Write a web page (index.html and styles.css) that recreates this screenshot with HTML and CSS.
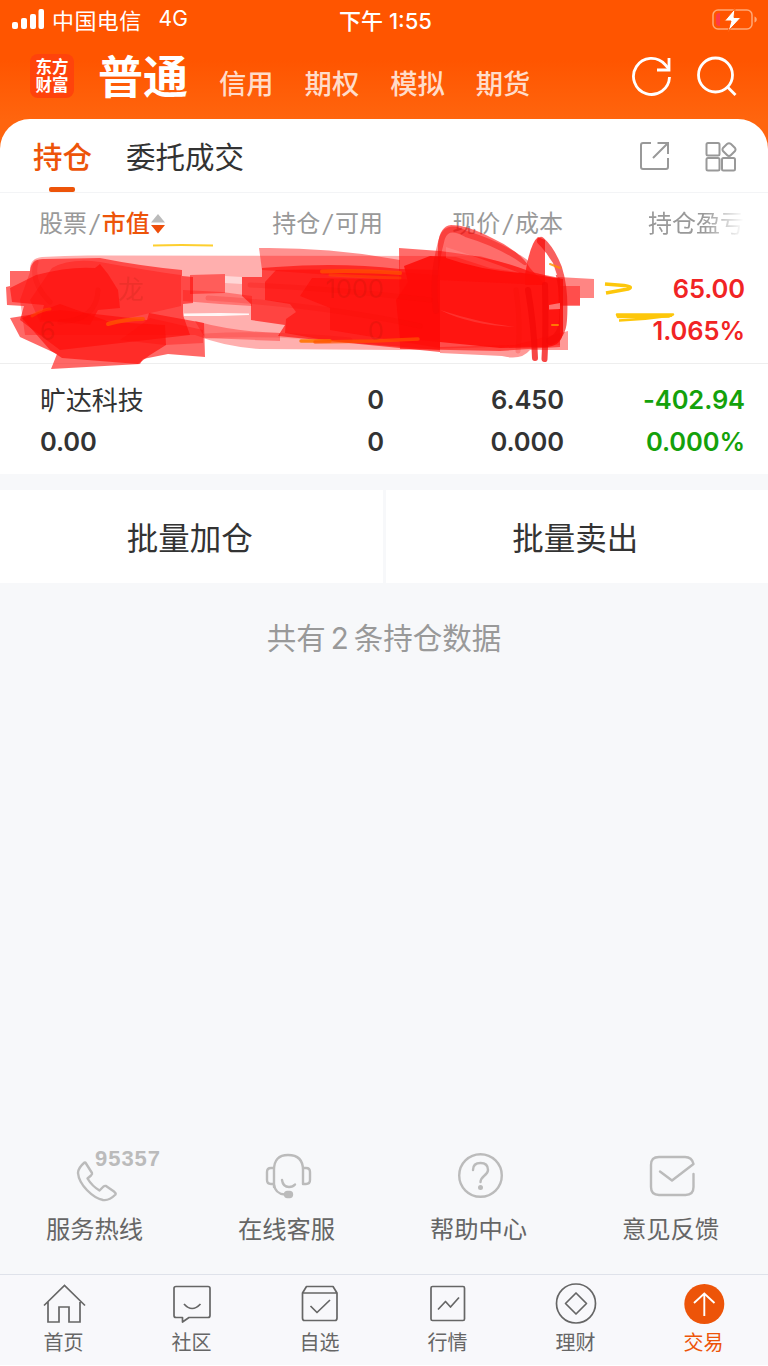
FILE: index.html
```html
<!DOCTYPE html>
<html lang="zh-CN">
<head>
  <meta charset="UTF-8">
  <meta name="viewport" content="width=device-width, initial-scale=1.0">
  <title>持仓</title>
  <link rel="stylesheet" href="styles.css">
</head>
<body>
  <div class="app">
    <div class="status">
      <div class="carrier">
        <svg width="34" height="22" viewBox="0 0 34 22" fill="#fff">
          <rect x="0" y="13" width="6" height="7" rx="2"/>
          <rect x="9" y="9" width="6" height="11" rx="2"/>
          <rect x="18" y="5" width="6" height="15" rx="2"/>
          <rect x="26.500" y="0" width="5.500" height="20" rx="2"/>
        </svg>
        <span class="operator">中国电信</span>
        <span>4G</span>
      </div>
      <div class="time">下午 1:55</div>
      <svg class="battery" width="48" height="24" viewBox="0 0 48 24">
        <rect x="2" y="2" width="39" height="19" rx="5" fill="none" stroke="#ffa875" stroke-width="1.500"/>
        <path d="M43.500 8.500c3 1 3 5 0 6z" fill="#ffa875"/>
        <path d="M9 5v13c-3 0-4-1-4-4V9c0-3 1-4 4-4z" fill="#ff3b45"/>
        <path d="M24 .500L13.500 13h6.500l-3 10.500L30 9.500h-7z" fill="#fff" stroke="#ff5800" stroke-width="1"/>
      </svg>
    </div>

    <header class="header">
      <div class="logo"><span>东方</span><span>财富</span></div>
      <nav class="accounts">
        <a class="current">普通</a>
        <a>信用</a>
        <a>期权</a>
        <a>模拟</a>
        <a>期货</a>
      </nav>
      <div class="header-icons">
        <svg width="42" height="42" viewBox="0 0 42 42" fill="none" stroke="#fff" stroke-width="2.800">
          <path d="M38.500 21a18 18 0 1 1-4.500-12.500L38 13"/>
          <path d="M38 2v12H26"/>
        </svg>
        <svg width="42" height="42" viewBox="0 0 42 42" fill="none" stroke="#fff" stroke-width="2.800">
          <circle cx="19.500" cy="19" r="17"/>
          <path d="M31.500 31l8 8"/>
        </svg>
      </div>
    </header>

    <main class="card">
      <div class="tabs">
        <a class="tab active">持仓</a>
        <a class="tab">委托成交</a>
        <div class="tab-icons">
          <svg width="32" height="32" viewBox="0 0 32 32" fill="none" stroke="#999" stroke-width="2">
            <path d="M12 2H4Q2 2 2 4V26Q2 28 4 28H27Q29 28 29 26V17"/>
            <path d="M18.500 2H29V13M29 2L14 17"/>
          </svg>
          <svg width="32" height="32" viewBox="0 0 32 32" fill="none" stroke="#999" stroke-width="2">
            <rect x="1.500" y="2" width="13" height="12.500" rx="1.500"/>
            <rect x="1.500" y="17" width="13" height="12.500" rx="1.500"/>
            <rect x="17" y="17" width="13" height="12.500" rx="1.500"/>
            <path d="M22 3Q24 1.500 26 3L30 7Q31 8.500 30 10L26 14Q24 16 22 14L18 10Q17 8.500 18 7Z"/>
          </svg>
        </div>
      </div>

      <div class="row head">
        <div class="cell">股票<i>/</i><b>市值</b><svg width="14" height="20" viewBox="0 0 14 20"><path d="M7 0l7 8.500H0z" fill="#bbb"/><path d="M0 11h14l-7 8.500z" fill="#ee4d0a"/></svg></div>
        <div class="cell">持仓<i>/</i>可用</div>
        <div class="cell">现价<i>/</i>成本</div>
        <div class="cell fade">持仓盈亏</div>
      </div>
      <div class="row up">
        <div class="cell"><span class="name ghost last-char">龙</span><span class="ghost">6</span></div>
        <div class="cell"><span class="ghost">1000</span><span class="ghost">0</span></div>
        <div class="cell"></div>
        <div class="cell profit"><span>65.00</span><span>1.065%</span></div>
      </div>
      <div class="row down">
        <div class="cell"><span class="name">旷达科技</span><span>0.00</span></div>
        <div class="cell"><span>0</span><span>0</span></div>
        <div class="cell"><span>6.450</span><span>0.000</span></div>
        <div class="cell profit"><span>-402.94</span><span>0.000%</span></div>
      </div>

      <!-- marker strokes over the first row -->
      <svg class="marker" width="768" height="160" viewBox="0 219 768 160">
        <g class="soft" fill="#ff0c08">
          <path opacity=".33" d="M30 272Q29 258 42 257Q70 255 100 255.500L480 256L560 280V345L400 350L260 349Q225 347 195 335L25 335L20 300Z"/>
          <!-- left -->
          <path opacity=".62" d="M30 271Q31 258 45 259L100 258Q140 266 182 270V276L193 277V303L183 304V315L190 335L60 350L20 320L24 306L7 305L6 287L10 286V271Z"/>
          <path opacity=".35" d="M52 268Q70 258 100 262Q150 271 181 275V306L120 320L40 322L30 300Z"/>
          <path opacity=".6" d="M36 275Q70 266 95 268L100 264L108 274L118 290L120 308L98 310L90 325L40 320L44 305L12 302L10 288Z"/>
          <path opacity=".62" d="M10 318L60 310L147 320L149 313L204 323L205 357L168 354L143 359L140 364L51 369L57 354L20 337Z"/>
          <path opacity=".65" d="M22 318L60 304L110 322L165 325L166 345L150 355L138 364L62 358L50 350Z"/>
          <path opacity=".35" d="M150 318L203 330V343L165 345L120 340Z"/>
          <!-- middle -->
          <path opacity=".5" d="M190 275L225 274V293L190 294Z"/>
          <path opacity=".35" d="M183 290L222 292L252 296V306L220 304L183 301Z"/>
          <path opacity=".35" d="M195 321Q235 332 280 333V341L205 338Z"/>
          <path opacity=".45" d="M259 248Q330 247 400 260V280L262 270Z"/>
          <path opacity=".66" d="M276 267Q340 262 400 269L440 270V352L278 336L285 325L251 320V304L242 296V277H262V268Z"/>
          <path opacity=".6" d="M276 270Q350 268 440 275V350L330 341L285 333L286 319L296 312L290 304L265 300V282Z"/>
          <path opacity=".6" d="M312 278L440 280V348L330 330V308L300 296Z"/>
          <!-- right -->
          <path opacity=".6" d="M399 248L440 251Q500 258 530 272L560 278V347L500 351L400 349Z"/>
          <path opacity=".85" d="M404 266L430 256L456 257L490 268L563 279V332Q562 345 548 347L500 348L400 338L396 300L408 282Z"/>
          <path opacity=".6" d="M438 280L438 244Q440 226 451 225Q467 225 492 238Q520 251 530 268L545 285Z"/>
          <path opacity=".72" d="M525 275Q530 243 538 237L545 240V285H525Z"/>
          <path opacity=".42" d="M515 345L568 331V350L530 350Q521 361 502 356L440 353V347Z"/>
          <path opacity=".5" d="M558 277L594 279V298L580 298V306H558Z"/>
          <path opacity=".45" d="M560 286H580V305H560Z"/>
        </g>
        <g class="soft" fill="none" stroke="#f40a08" stroke-linecap="round">
          <path opacity=".45" stroke-width="6" d="M436 311Q431 280 441 242Q445 222 466 234Q500 244 525 262"/>
          <path opacity=".65" stroke-width="8" d="M541 241Q551 250 558 268Q565 290 563 320Q562 337 550 341"/>
          <path opacity=".75" stroke-width="6" d="M528 290Q534 325 535 358M545 285Q546 330 544.500 359"/>
          <path opacity=".18" stroke-width="5" d="M36 262Q30 282 50 302M98 290Q97 320 60 322M250 285Q340 289 430 300M208 298Q330 306 420 326M205 336Q270 332 350 340M516 290Q521 320 518 351"/>
        </g>
        <g class="soft" fill="#fff">
          <path opacity=".9" d="M184 313.500L220 313L249 313.500V315L220 316H184Z"/>
          <path opacity=".5" d="M225 276L242 277V284L225 283Z"/>
          <path opacity=".95" d="M545.500 252L553 263L557 275L545.500 274Z"/>
          <path opacity=".4" d="M549 305L560 303V309L549 309.500Z"/>
          <path opacity=".12" d="M446 247Q480 258 520 273Q480 270 446 258ZM440 310Q470 325 515 327Q480 323 440 310Z"/>
        </g>
        <g class="soft" fill="none" stroke="#ff5200" stroke-linecap="round">
          <path opacity=".75" stroke-width="4" d="M322 271.500Q355 270 400 273"/>
          <path opacity=".45" stroke-width="3" d="M330 275Q370 277 400 278M32 316Q43 309 50 309"/>
          <path opacity=".8" stroke-width="4" d="M108 324Q126 319 143 319"/>
          <path opacity=".9" stroke-width="3.500" stroke="#ff7600" d="M301 341H330"/>
          <path opacity=".7" stroke-width="3.500" d="M315 342L375 341L418 339"/>
          <path opacity=".8" stroke-width="2" stroke="#ff9000" d="M550 264L560 268M552 325H558"/>
        </g>
        <g fill="none" stroke="#fdc70b" stroke-linejoin="round">
          <path stroke-width="1.800" d="M153 245.500Q180 244.500 213 245.500" opacity=".85"/>
          <path stroke-width="3.600" d="M605 284L624 285.500Q634 287 628 289L606 293"/>
          <path stroke-width="2.500" fill="#fdc70b" d="M617 314.500H673L669 316.500L618 317Z"/>
          <path stroke-width="2.500" d="M619 320.500Q645 319.500 672 315.500"/>
        </g>
      </svg>
    </main>

    <div class="batch">
      <button>批量加仓</button>
      <button>批量卖出</button>
    </div>
    <p class="summary">共有<span>2</span>条持仓数据</p>

    <div class="services">
      <a class="service">
        <svg width="192" height="64" viewBox="0 0 192 64" fill="none" stroke="#bbb" stroke-width="2.400" stroke-linejoin="round">
          <path d="M84.500 18.500Q78 24 78 29C79 41 93 54 103 56Q109 57 115.500 50.500Q116 49 114 47.500L106 42Q104 41.500 103 43L99.500 46.500Q92 42 87.500 34.500L91 31.500Q92.500 30 92 29L86 19.500Q85.500 18 84.500 18.500Z"/>
          <text class="hotline" x="95" y="22" textLength="65" lengthAdjust="spacing">95357</text>
        </svg>
        <span>服务热线</span>
      </a>
      <a class="service">
        <svg width="192" height="64" viewBox="0 0 192 64" fill="none" stroke="#bbb" stroke-width="2.400" stroke-linecap="round">
          <path d="M82 43V26Q82 11 96 11Q111 11 111 26V40M82 24H79Q75 24 75 28V36Q75 40 79 40H82M111 24H114Q118 24 118 28V36Q118 40 114 40H111M82 40Q83 50 93 50.500M90 36Q91 43 97 43Q101 43 103 40.500"/>
          <rect x="93" y="48" width="7" height="5" rx="2.500" fill="#bbb"/>
        </svg>
        <span>在线客服</span>
      </a>
      <a class="service">
        <svg width="192" height="64" viewBox="0 0 192 64" fill="none" stroke="#bbb" stroke-width="2.400" stroke-linecap="round">
          <circle cx="96.500" cy="31.500" r="21.300"/>
          <path d="M89 26Q89 19 96.500 19Q104 19 104 26Q104 29 100 32Q96.500 35 96.500 38"/>
          <circle cx="96.500" cy="43.500" r="1.300" fill="#bbb"/>
        </svg>
        <span>帮助中心</span>
      </a>
      <a class="service">
        <svg width="192" height="64" viewBox="0 0 192 64" fill="none" stroke="#bbb" stroke-width="2.400" stroke-linecap="round" stroke-linejoin="round">
          <path d="M117.500 30V43Q117.500 51 109.500 51H83Q75 51 75 43V21Q75 13 83 13H109Q116 13 117.500 20L96 36.500L84 27.500"/>
        </svg>
        <span>意见反馈</span>
      </a>
    </div>

    <nav class="tabbar">
      <a>
        <svg width="44" height="44" viewBox="0 0 44 44" fill="none" stroke="#666" stroke-width="1.700">
          <path d="M2 23.500L22.500 3.500L43 23.500M6 20V40H17V25H27V40H38V20"/>
        </svg>
        <span>首页</span>
      </a>
      <a>
        <svg width="44" height="44" viewBox="0 0 44 44" fill="none" stroke="#666" stroke-width="1.700" stroke-linejoin="round">
          <path d="M6 4.500H38Q40 4.500 40 6.500V33.500Q40 35.500 38 35.500H19L12.500 40V35.500H6Q4 35.500 4 33.500V6.500Q4 4.500 6 4.500Z"/>
          <path d="M14 22Q22 31 30.500 22"/>
        </svg>
        <span>社区</span>
      </a>
      <a>
        <svg width="44" height="44" viewBox="0 0 44 44" fill="none" stroke="#666" stroke-width="1.700" stroke-linejoin="round">
          <path d="M4.500 11L8.500 4.500H35L39 11V36Q39 38.500 37 38.500H6.500Q4.500 38.500 4.500 36ZM4.500 11H39M12.500 24L19 30.500L32 18"/>
        </svg>
        <span>自选</span>
      </a>
      <a>
        <svg width="44" height="44" viewBox="0 0 44 44" fill="none" stroke="#666" stroke-width="1.700" stroke-linejoin="round">
          <rect x="5" y="4.500" width="33.500" height="34" rx="1.500"/>
          <path d="M12 27.500L19.500 19.500L24.500 25L33 15.500"/>
        </svg>
        <span>行情</span>
      </a>
      <a>
        <svg width="44" height="44" viewBox="0 0 44 44" fill="none" stroke="#666" stroke-width="1.700" stroke-linejoin="round">
          <circle cx="22" cy="21.500" r="19.500"/>
          <path d="M22 11L32.500 21.500L22 32L11.500 21.500Z"/>
        </svg>
        <span>理财</span>
      </a>
      <a class="selected">
        <svg width="44" height="44" viewBox="0 0 44 44" fill="none" stroke="#fff" stroke-width="1.900">
          <circle cx="22.300" cy="22" r="20" fill="#ed5409" stroke="none"/>
          <path d="M22.300 34V12M12 21L22.300 11.500L32.500 21"/>
        </svg>
        <span>交易</span>
      </a>
    </nav>
  </div>
</body>
</html>
```

FILE: styles.css
```css
* {
  box-sizing: border-box;
}

body {
  margin: 0;
  background: #fff;
  font-family: Inter, "Noto Sans CJK SC", sans-serif;
  color: #333;
}

svg {
  display: block;
  flex: none;
}

.app {
  width: 768px;
  height: 1365px;
  display: flex;
  flex-direction: column;
  background: linear-gradient(#ff5500 0, #ff5500 60px, #ff650e 120px, #ff650e 160px, #f7f8fa 160px);
}

/* status bar */
.status {
  height: 40px;
  display: grid;
  grid-template-columns: 1fr auto 1fr;
  align-items: center;
  padding: 0 9px 3px 12px;
  color: #fff;
  font-size: 22px;
}

.carrier {
  display: flex;
  align-items: center;
  font-size: 21px;
}

.carrier svg {
  margin-top: 2px;
}

.operator {
  margin: 0 17px 0 6px;
  font-size: 22px;
  letter-spacing: 0.4px;
}

.time {
  font-weight: 500;
  font-size: 22px;
}

.battery {
  justify-self: end;
  margin-top: 2px;
}

.header {
  height: 79px;
  display: flex;
  align-items: flex-start;
  padding: 0 30px 0 30px;
  color: #fff;
}

.logo {
  width: 44px;
  height: 44px;
  margin-top: 14px;
  padding-top: 4px;
  border-radius: 8px;
  background: #ff430b;
  display: flex;
  flex-direction: column;
  align-items: center;
  font-size: 16.5px;
  font-weight: bold;
  line-height: 18px;
}

.accounts {
  display: flex;
  align-items: baseline;
  gap: 31px;
  margin: 3px 0 0 24px;
  font-size: 27.3px;
  font-weight: 500;
  line-height: 70px;
  color: #ffdcca;
}

.accounts .current {
  font-size: 45px;
  font-weight: bold;
  color: #fff;
}

.header-icons {
  display: flex;
  gap: 23px;
  margin: 16px 0 0 auto;
}

/* positions */
.card {
  position: relative;
  height: 355px;
  background: #fff;
  border-radius: 30px 30px 0 0;
}

.tabs {
  height: 74px;
  display: flex;
  padding: 0 31px 0 33px;
  border-bottom: 1px solid #f3f4f6;
  font-size: 29.5px;
  line-height: 76px;
}

.tab {
  margin-right: 34px;
}

.tab.active {
  position: relative;
  color: #ed5409;
  font-weight: 500;
}

.tab.active::after {
  content: "";
  position: absolute;
  left: 16px;
  bottom: 0;
  width: 26px;
  height: 5px;
  border-radius: 2px;
  background: #ed5409;
}

.tab-icons {
  display: flex;
  gap: 34px;
  margin: 22px 0 0 auto;
}

.row {
  display: grid;
  grid-template-columns: 184px 160px 180px 181px;
  height: 110px;
  padding: 15px 23px 0 40px;
  font-size: 25.5px;
  font-weight: 600;
  line-height: 42px;
  letter-spacing: -0.1px;
}

.row.up {
  height: 111px;
  border-bottom: 1px solid #eee;
}

.cell {
  text-align: right;
}

.cell:first-child {
  text-align: left;
}

.cell span {
  display: block;
}

.row.head {
  height: 60px;
  padding-top: 0;
  padding-left: 39px;
  line-height: 62px;
  font-size: 24px;
  font-weight: normal;
  letter-spacing: 0;
  color: #999;
}

.head .cell:first-child {
  display: flex;
  align-items: center;
}

.head i {
  padding: 0 3px;
}

.head b {
  font-weight: 500;
  color: #ed5409;
}

.head svg {
  margin-left: 1px;
}

.fade {
  -webkit-mask-image: linear-gradient(90deg, #000 78%, transparent);
  mask-image: linear-gradient(90deg, #000 78%, transparent);
}

.name {
  font-weight: normal;
  font-size: 26px;
  position: relative;
  top: 1px;
}

.ghost {
  position: relative;
  z-index: 2;
  color: rgba(120, 20, 0, 0.13);
  font-weight: normal;
}

.last-char {
  padding-left: 78px;
}

.up .profit {
  color: #f12424;
}

.down .profit {
  color: #14a10b;
}

.marker {
  position: absolute;
  left: 0;
  top: 100px;
  z-index: 1;
}

.soft {
  filter: blur(0.6px);
}

.batch {
  display: grid;
  grid-template-columns: 1fr 1fr;
  gap: 3px;
  padding-top: 16px;
  height: 109px;
  background: #f7f8fa;
}

.batch button {
  border: none;
  background: #fff;
  color: #333;
  font-family: inherit;
  font-size: 31.5px;
  padding: 0 3px 2px 0;
}

.summary {
  margin: 35px 0 0;
  text-align: center;
  font-size: 29.5px;
  line-height: 40px;
  color: #999;
}

.summary span {
  padding: 0 5px;
}

.services {
  display: grid;
  grid-template-columns: repeat(4, 192px);
  margin-top: auto;
  height: 130px;
}

.service {
  display: flex;
  flex-direction: column;
  font-size: 24.3px;
  line-height: 43px;
  color: #666;
}

.service span {
  padding-right: 3px;
  text-align: center;
}

.hotline {
  fill: #bbb;
  stroke: none;
  font: bold 22px "Liberation Sans", sans-serif;
}

.tabbar {
  display: grid;
  grid-template-columns: repeat(6, 128px);
  height: 91px;
  padding-top: 7px;
  border-top: 1px solid #dfe2ea;
  background: #f8f8fb;
}

.tabbar a {
  display: flex;
  flex-direction: column;
  align-items: center;
  font-size: 20px;
  line-height: 35px;
  color: #666;
}

.tabbar span {
  padding-right: 1px;
}

.tabbar .selected {
  color: #ed5409;
}
```
